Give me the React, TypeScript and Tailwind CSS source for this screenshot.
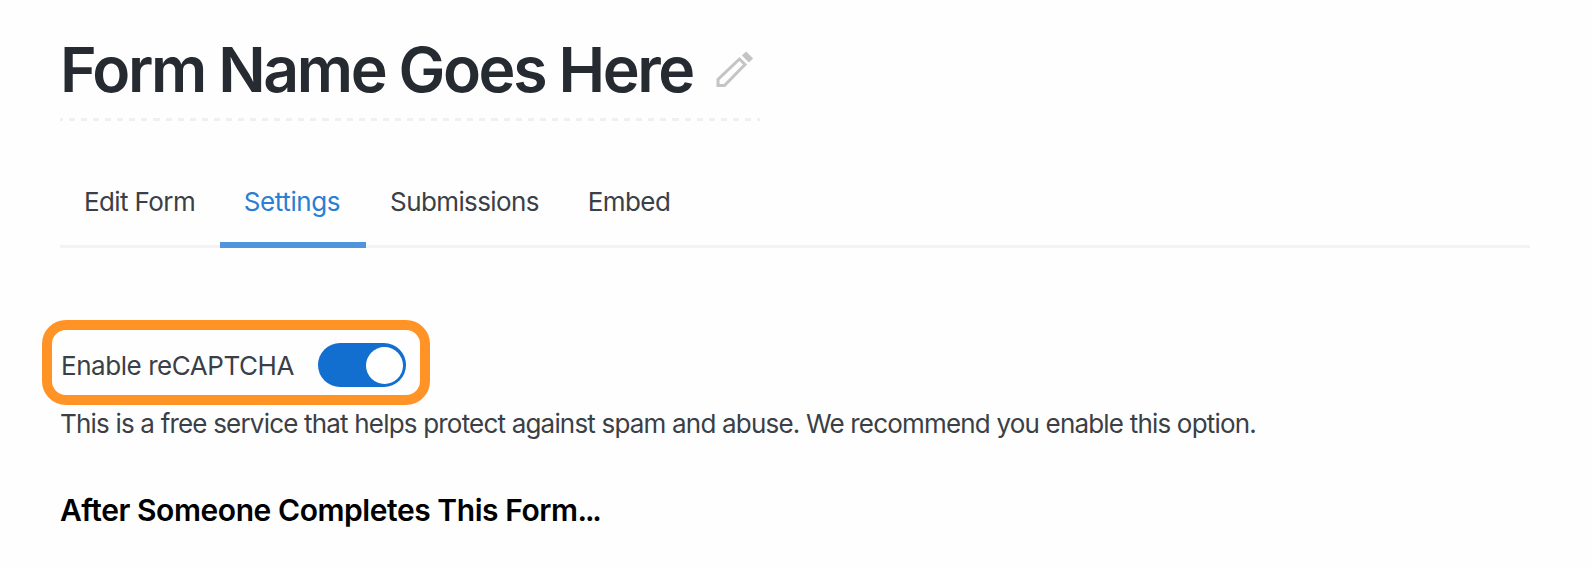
import React from "react";

const tabs = [
    { label: "Edit Form", style: "w-[160px] pr-[1px] tracking-[-0.6px]" },
    { label: "Settings", style: "w-[146px] pr-[2px] tracking-[-0.4px]", active: true },
    { label: "Submissions", style: "w-[198px] pr-[1px] tracking-[-0.6px]" },
    { label: "Embed", style: "w-[131px] pr-[1px] tracking-[-0.6px]" },
];

function PencilIcon() {
    return (
        <svg width="38" height="38" viewBox="0 0 38 38" fill="none" stroke="#c2c4c6" strokeWidth="3">
            <path d="M2 35.500 V29.500 L23.500 9 L29 14.500 L8.500 35.500 Z" />
            <path d="M28 3.500 L35 10.500" strokeWidth="6" />
        </svg>
    );
}

function App() {
    return (
        <div className="h-[568px] w-full overflow-hidden bg-[#fefefe] font-[Inter,sans-serif] text-[#3b3f46] [font-variant-ligatures:none]">
            <div className="ml-[60px] w-[1470px]">
                {/* form title */}
                <div className="flex h-[118px] w-[700px] items-center pt-[20px]">
                    <h1 className="w-[636px] whitespace-nowrap text-[62.500px] font-semibold leading-[70px] tracking-[-2.4px] text-[#262b32]">
                        Form Name Goes Here
                    </h1>
                    <button className="ml-[20px]">
                        <PencilIcon />
                    </button>
                </div>
                <div className="h-[3px] w-[700px] bg-[repeating-linear-gradient(90deg,#f0f0f0_0_3px,transparent_3px_9px,#f0f0f0_9px_12.07px)]" />

                <nav className="mt-[42px] flex h-[85px] border-b-[3px] border-[#f3f3f3]">
                    {tabs.map((tab) => (
                        <button
                            key={tab.label}
                            className={`${tab.style} h-[85px] whitespace-nowrap border-b-[6px] pb-[3px] text-[26px] ${
                                tab.active ? "border-[#4f94dc] text-[#2b7fd3]" : "border-transparent"
                            }`}
                        >
                            {tab.label}
                        </button>
                    ))}
                </nav>

                <div className="-ml-[18px] mt-[72px] flex h-[85px] w-[388px] items-center rounded-[24px] border-[10px] border-[#ff9326] pl-[9px] pt-[5px]">
                    <span className="w-[257px] whitespace-nowrap text-[26px] tracking-[-0.45px]">Enable reCAPTCHA</span>
                    <button className="flex h-[44px] w-[88px] shrink-0 items-center justify-end rounded-full bg-[#126fd0] p-[3.5px]">
                        <span className="h-[37px] w-[37px] rounded-full bg-white" />
                    </button>
                </div>
                <p className="mt-[1px] whitespace-nowrap text-[26px] leading-[36px] tracking-[-0.81px]">
                    This is a free service that helps protect against spam and abuse. We recommend you enable this option.
                </p>
                <h2 className="mt-[48px] whitespace-nowrap text-[30px] font-semibold leading-[40px] tracking-[-0.44px] text-black">
                    After Someone Completes This Form<span className="tracking-[-2.2px]">...</span>
                </h2>
            </div>
        </div>
    );
}

export default App;
